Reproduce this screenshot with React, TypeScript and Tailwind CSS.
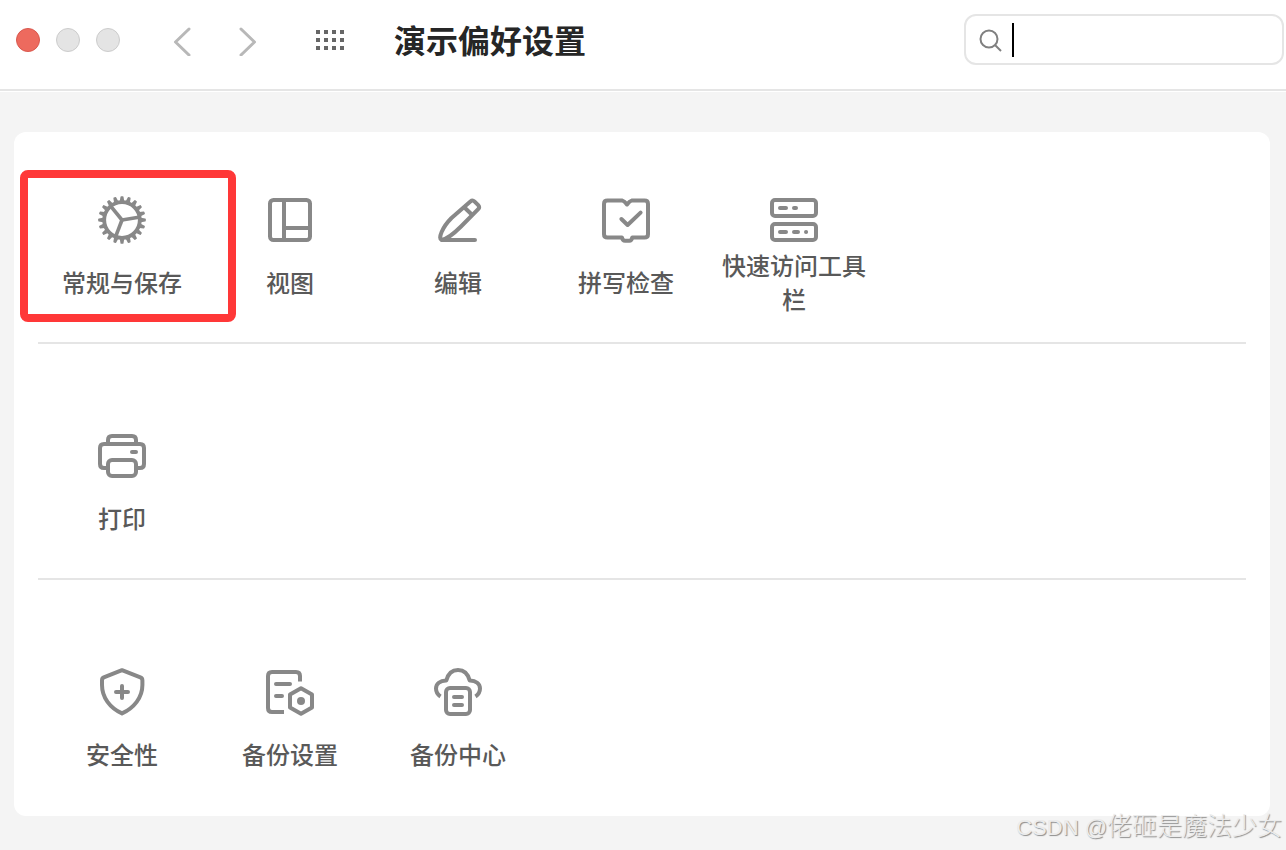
import type { ReactNode } from 'react';

interface PreferenceItem {
  label: string;
  icon: ReactNode;
  highlighted?: boolean;
}

const TEETH = Array.from({ length: 20 }, (_, i) => i * 18);
const SPOKES = [-9, 111, 231];

function Icon({ children }: { children: ReactNode }) {
  return (
    <svg
      viewBox="0 0 48 48"
      className="size-12 shrink-0"
      fill="none"
      stroke="#888888"
      strokeWidth="4"
      strokeLinejoin="round"
      aria-hidden="true"
    >
      {children}
    </svg>
  );
}

const GearIcon = () => (
  <Icon>
    <circle cx="24" cy="24" r="17.8" strokeWidth="3.8" />
    {TEETH.map((angle) => (
      <path
        key={angle}
        d="M21.8 5 L22.5 0.8 Q22.6 0.2 23.2 0.2 H24.8 Q25.4 0.2 25.5 0.8 L26.2 5 Z"
        fill="#888888"
        stroke="none"
        transform={`rotate(${angle} 24 24)`}
      />
    ))}
    {SPOKES.map((angle) => (
      <path key={angle} d="M24 24 H41" strokeWidth="3.6" transform={`rotate(${angle} 24 24)`} />
    ))}
  </Icon>
);

const LayoutIcon = () => (
  <Icon>
    <rect x="4" y="4" width="40" height="40" rx="3.5" />
    <path d="M18 4 V44 M18 32 H44" />
  </Icon>
);

const PencilIcon = () => (
  <Icon>
    <path
      d="M41 44 H7.5 C4 42.5 8 31.5 17.5 22 L36.4 5.4 Q38.5 3.6 40.4 5.4 L44.2 9.2 Q46 11.2 44.2 13.1 L27 30.5 C20 37.5 13 43 7.5 44"
      strokeLinecap="round"
    />
    <path d="M31 12 L38.5 19.3" />
  </Icon>
);

const BookIcon = () => (
  <Icon>
    <path d="M20.5 4.6 H5.5 Q2 4.6 2 8 V38.2 Q2 41.6 5.5 41.6 H20 Q20.6 44.7 23 44.7 H27.4 Q29.6 44.7 30.2 41.6 H42.5 Q46 41.6 46 38.2 V8 Q46 4.6 42.5 4.6 H29.5 Q27.5 5 25 8.5 Q22.5 5 20.5 4.6 Z" />
    <path d="M19.4 23 L25.6 29 L38.6 16.6" strokeLinecap="round" />
  </Icon>
);

const ToolbarIcon = () => (
  <Icon>
    <rect x="2" y="4" width="44" height="16" rx="3" />
    <rect x="2" y="28" width="44" height="16" rx="3" />
    <path d="M10 12 H16 M24 12 H26 M10 36 H16 M24 36 H28 M36 36 H36.1" strokeLinecap="round" />
  </Icon>
);

const PrinterIcon = () => (
  <Icon>
    <path d="M10 12 V8 Q10 4 14 4 H34 Q38 4 38 8 V12" />
    <path d="M10 36 H6 Q2 36 2 32 V16 Q2 12 6 12 H42 Q46 12 46 16 V32 Q46 36 42 36 H38" />
    <rect x="10" y="28" width="28" height="16" rx="4" />
    <path d="M34 20 H38" strokeLinecap="round" />
  </Icon>
);

const ShieldIcon = () => (
  <Icon>
    <path d="M24 2.2 L5.8 9.4 Q4 10.2 4 12.4 V17 C4 29.5 12 40 24 45.4 C36 40 44.4 29.5 44.4 17 V12.4 Q44.4 10.2 42.4 9.4 Z" />
    <path d="M24 18 V30 M18 24 H30" strokeLinecap="round" />
  </Icon>
);

const BackupSettingsIcon = () => (
  <Icon>
    <path d="M34 13.6 V8 Q34 4 30 4 H6 Q2 4 2 8 V40 Q2 44 6 44 H18" />
    <path d="M10 16 H24 M10 28 H16" strokeLinecap="round" />
    <path d="M35 20.2 L46 26.6 V39.4 L35 45.7 L24 39.4 V26.6 Z" />
    <circle cx="35" cy="33" r="4" fill="#888888" stroke="none" />
  </Icon>
);

const BackupCenterIcon = () => (
  <Icon>
    <path d="M6.5 28.5 C3.5 26.5 2 23.5 2 20.5 C2 15.8 6 12.4 12.3 12.5 C14 6 18 2 24 2 S34 6 35.7 12.5 C42 12.4 46 15.8 46 20.5 C46 23.5 44.5 26.5 41.5 28.5" />
    <rect x="12" y="20" width="24" height="26" rx="4" />
    <path d="M20 29 H28 M20 37 H28" strokeLinecap="round" />
  </Icon>
);

const sections: PreferenceItem[][] = [
  [
    { label: '常规与保存', icon: <GearIcon />, highlighted: true },
    { label: '视图', icon: <LayoutIcon /> },
    { label: '编辑', icon: <PencilIcon /> },
    { label: '拼写检查', icon: <BookIcon /> },
    { label: '快速访问工具栏', icon: <ToolbarIcon /> },
  ],
  [{ label: '打印', icon: <PrinterIcon /> }],
  [
    { label: '安全性', icon: <ShieldIcon /> },
    { label: '备份设置', icon: <BackupSettingsIcon /> },
    { label: '备份中心', icon: <BackupCenterIcon /> },
  ],
];

function PreferenceButton({ item }: { item: PreferenceItem }) {
  return (
    <button type="button" className="relative flex w-[168px] flex-col items-center px-3">
      {item.icon}
      <span className="mt-1 flex h-[68px] items-center text-center text-2xl leading-[34px] font-medium text-[#595959]">
        {item.label}
      </span>
      {item.highlighted && (
        <span className="absolute -top-[26px] -right-[30px] -bottom-[6px] -left-[18px] rounded-lg border-8 border-[#ff3838]" />
      )}
    </button>
  );
}

function Header() {
  return (
    <header className="flex items-center border-b-2 border-[#e5e5e5] bg-white pt-[14px] pr-[2px] pb-[23px] pl-4">
      <div className="flex gap-4">
        <button type="button" aria-label="关闭" className="size-6 rounded-full border border-[#d9584e] bg-[#ed6a5e]" />
        <button type="button" aria-label="最小化" className="size-6 rounded-full border border-[#cccccc] bg-[#e4e4e4]" />
        <button type="button" aria-label="缩放" className="size-6 rounded-full border border-[#cccccc] bg-[#e4e4e4]" />
      </div>

      <div className="ml-[50px] flex gap-[42px]">
        <button type="button" aria-label="后退">
          <svg viewBox="0 0 24 32" className="h-8 w-6" fill="none" stroke="#b8b8b8" strokeWidth="3">
            <path d="M19 5 L5.5 18 L19 31" strokeLinecap="round" strokeLinejoin="round" />
          </svg>
        </button>
        <button type="button" aria-label="前进">
          <svg viewBox="0 0 24 32" className="h-8 w-6" fill="none" stroke="#b8b8b8" strokeWidth="3">
            <path d="M5 5 L18.5 18 L5 31" strokeLinecap="round" strokeLinejoin="round" />
          </svg>
        </button>
      </div>

      <button type="button" aria-label="全部显示" className="ml-14 grid grid-cols-4 gap-1">
        {Array.from({ length: 12 }, (_, i) => (
          <span key={i} className="size-1 bg-[#666666]" />
        ))}
      </button>

      <h1 className="ml-[50px] pb-[2px] text-[32px] leading-[50px] font-bold text-[#262626]">演示偏好设置</h1>

      <label className="ml-auto flex h-[51px] w-80 items-center self-start rounded-xl border-2 border-[#e5e5e5] pl-3">
        <svg viewBox="0 0 24 24" className="size-6 shrink-0" fill="none" stroke="#808080" strokeWidth="2">
          <circle cx="11" cy="11" r="8.5" />
          <path d="M17 17 L23 23" />
        </svg>
        <span className="ml-[10px] h-[34px] w-[2px] shrink-0 bg-black" />
        <input type="text" aria-label="搜索" className="h-full min-w-0 flex-1 bg-transparent text-2xl outline-none" />
      </label>
    </header>
  );
}

export default function App() {
  return (
    <div className="relative flex min-h-screen flex-col bg-[#f4f4f4] font-['Noto_Sans_CJK_SC',sans-serif]">
      <Header />

      <main className="border-t border-white pt-10 pr-4 pb-[34px] pl-[14px]">
        <div className="rounded-xl bg-white px-6">
          {sections.map((items, index) => (
            <section
              key={items[0].label}
              className={`flex flex-wrap ${index === 0 ? 'pt-16' : 'pt-[88px]'} ${
                index === sections.length - 1 ? 'pb-7' : 'border-b-2 border-[#e5e5e5] pb-[26px]'
              }`}
            >
              {items.map((item) => (
                <PreferenceButton key={item.label} item={item} />
              ))}
            </section>
          ))}
        </div>
      </main>

      <p className="absolute right-1 bottom-1 font-['Liberation_Sans','Noto_Sans_CJK_SC',sans-serif] text-[25px] leading-9 font-light text-[#ececec] [text-shadow:1px_1px_1px_#8c8c8c]">
        <span className="text-[22px]">CSDN @</span>佬砸是魔法少女
      </p>
    </div>
  );
}
